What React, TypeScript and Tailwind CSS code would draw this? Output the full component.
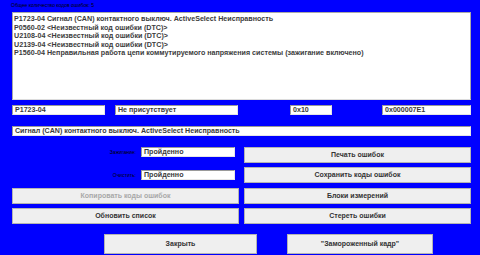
const font = { fontFamily: '"Liberation Sans", Arial, sans-serif' };

const errors = [
  "P1723-04 Сигнал (CAN) контактного выключ. ActiveSelect Неисправность",
  "P0560-02 <Неизвестный код ошибки (DTC)>",
  "U2108-04 <Неизвестный код ошибки (DTC)>",
  "U2139-04 <Неизвестный код ошибки (DTC)>",
  "P1560-04 Неправильная работа цепи коммутируемого напряжения системы (зажигание включено)",
];

function Field({ value, className }: { value: string; className: string }) {
  return (
    <div
      className={`h-[10px] bg-white border border-[#9a9a9a] border-r-[#e6e6e6] border-b-[#e6e6e6] px-[2px] text-[7.1px] leading-[8px] font-bold text-[#3a3a3a] whitespace-nowrap overflow-hidden ${className}`}
    >
      {value}
    </div>
  );
}

function Btn({
  label,
  disabled,
  className,
}: {
  label: string;
  disabled?: boolean;
  className: string;
}) {
  return (
    <button
      disabled={disabled}
      className={`flex items-center justify-center bg-[#efefef] border border-[#b4b4b4] text-[7px] font-bold ${
        disabled ? "text-[#a8a8a8]" : "text-[#333]"
      } ${className}`}
    >
      {label}
    </button>
  );
}

export default function App() {
  return (
    <div
      className="w-[480px] h-[255px] bg-[#0000ff] pl-[12px] pr-[9px] flex flex-col overflow-hidden"
      style={font}
    >
      {/* total count caption */}
      <div className="h-[12px] pt-[2px] text-[5px] leading-[6px] text-black -ml-[1px]">
        Общее количество кодов ошибок: 5
      </div>

      {/* error list */}
      <div className="h-[88px] bg-white border border-[#a9a9a9] border-b-[#dcdcdc] pl-[1px] pt-[2px]">
        {errors.map((e) => (
          <div key={e} className="h-[8.6px] text-[7.15px] leading-[8.6px] font-bold text-[#3c3c3c] whitespace-nowrap">
            {e}
          </div>
        ))}
      </div>

      {/* selected code details */}
      <div className="flex mt-[5px] h-[10px]">
        <Field value="P1723-04" className="w-[93px]" />
        <Field value="Не присутствует" className="w-[123px] ml-[10px]" />
        <Field value="0x10" className="w-[42px] ml-[52px]" />
        <Field value="0x000007E1" className="w-[89px] ml-[50px]" />
      </div>

      <Field value="Сигнал (CAN) контактного выключ. ActiveSelect Неисправность" className="mt-[11px] w-full" />

      {/* status + actions */}
      <div className="mt-[11px] grid grid-cols-2 gap-x-[5px]">
        <div className="h-[16px] flex items-start">
          <span className="w-[129px] pr-[5px] pt-[3px] text-right text-[5px] leading-[5px] text-black">Зажигание:</span>
          <Field value="Пройденно" className="w-[94px]" />
        </div>
        <Btn label="Печать ошибок" className="h-[16px]" />

        <div className="h-[16px] mt-[4px] flex items-start pt-[3px]">
          <span className="w-[129px] pr-[5px] pt-[3px] text-right text-[5px] leading-[5px] text-black">Очистить:</span>
          <Field value="Пройденно" className="w-[94px]" />
        </div>
        <Btn label="Сохранить коды ошибок" className="h-[16px] mt-[4px]" />

        <Btn label="Копировать коды ошибок" disabled className="h-[16px] mt-[5px]" />
        <Btn label="Блоки измерений" className="h-[16px] mt-[5px]" />

        <Btn label="Обновить список" className="h-[16px] mt-[4px]" />
        <Btn label="Стереть ошибки" className="h-[16px] mt-[4px]" />
      </div>

      <div className="flex mt-[10px]">
        <Btn label="Закрыть" className="h-[20px] w-[153px] ml-[92px]" />
        <Btn label={'"Замороженный кадр"'} className="h-[20px] w-[146px] ml-[30px]" />
      </div>
    </div>
  );
}
